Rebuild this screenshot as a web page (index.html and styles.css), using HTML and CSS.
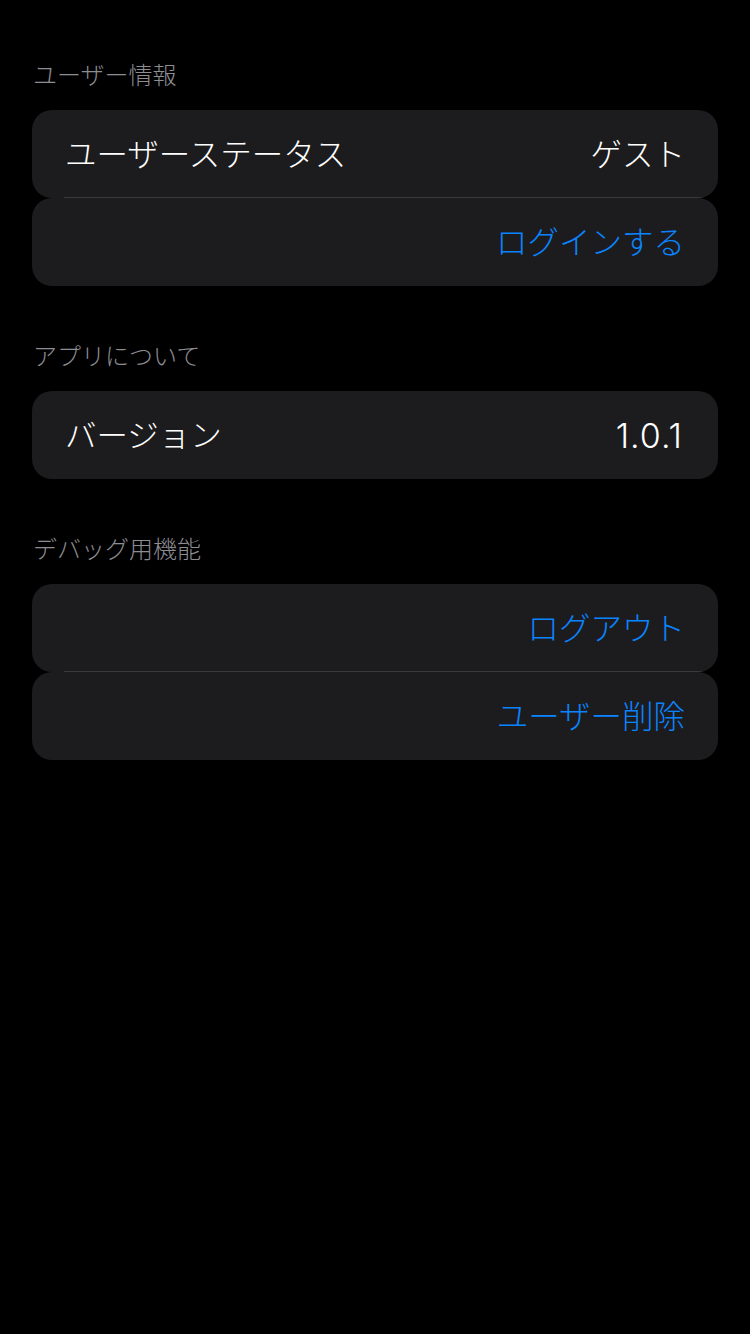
FILE: index.html
```html
<!DOCTYPE html>
<html lang="ja">
<head>
<meta charset="utf-8">
<title>設定</title>
<link rel="stylesheet" href="styles.css">
</head>
<body>
<main class="page">
  <section class="section">
    <h2 class="section-title">ユーザー情報</h2>
    <div class="group">
      <div class="row row-sep">
        <span class="label">ユーザーステータス</span>
        <span class="value">ゲスト</span>
      </div>
      <div class="row row-action">
        <span class="action">ログインする</span>
      </div>
    </div>
  </section>
  <section class="section">
    <h2 class="section-title">アプリについて</h2>
    <div class="group">
      <div class="row">
        <span class="label">バージョン</span>
        <span class="value value-num">1.0.1</span>
      </div>
    </div>
  </section>
  <section class="section">
    <h2 class="section-title">デバッグ用機能</h2>
    <div class="group">
      <div class="row row-sep row-action">
        <span class="action">ログアウト</span>
      </div>
      <div class="row row-action">
        <span class="action">ユーザー削除</span>
      </div>
    </div>
  </section>
</main>
</body>
</html>
```

FILE: styles.css
```css
html, body {
  margin: 0;
  padding: 0;
  background: #000;
}
body {
  width: 750px;
  height: 1334px;
  font-family: "Noto Sans CJK JP", "Noto Sans", sans-serif;
  color: #fff;
}
.page {
  padding: 59px 32px 0;
}
.section + .section {
  margin-top: 54px;
}
.section-title {
  margin: 0 0 19px;
  padding-left: 1px;
  height: 32px;
  line-height: 30px;
  font-size: 24px;
  font-weight: 300;
  color: #8d8d93;
}
.group {
  display: flex;
  flex-direction: column;
}
.row {
  height: 88px;
  box-sizing: border-box;
  padding: 0 33px 5px 33px;
  display: flex;
  align-items: center;
  justify-content: space-between;
  background: #1c1c1e;
  border-radius: 20px;
  font-size: 31.5px;
  font-weight: 300;
}
.row-sep {
  background:
    linear-gradient(#3a3a3c, #3a3a3c) no-repeat left 32px bottom / calc(100% - 32px) 1px,
    #1c1c1e;
}
.row-action {
  justify-content: flex-end;
}
.label, .value {
  color: #fff;
}
.value-num {
  font-family: "Inter", "Noto Sans", sans-serif;
  font-weight: 300;
  font-size: 34px;
  letter-spacing: 1px;
  margin-top: 6px;
  margin-right: 2px;
}
.action {
  color: #0a84ff;
}
```
